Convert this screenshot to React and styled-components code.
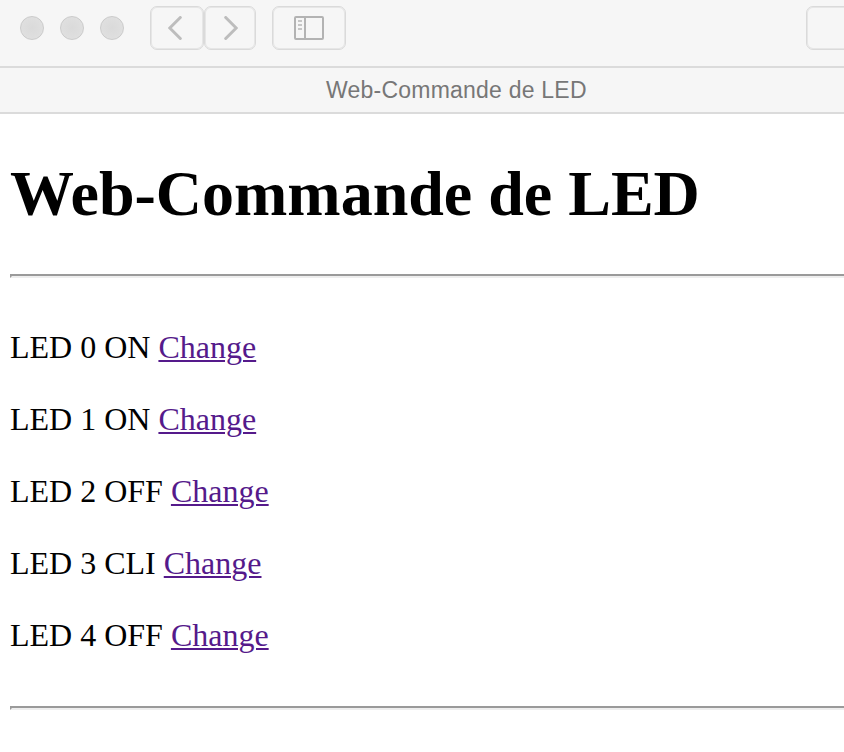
import React from "react";
import styled, { createGlobalStyle } from "styled-components";

const GlobalStyle = createGlobalStyle`
  * { box-sizing: border-box; }
  html, body { margin: 0; padding: 0; background: #fff; overflow: hidden; }
`;

const Window = styled.div`
  width: 844px;
  height: 752px;
  overflow: hidden;
  background: #fff;
`;

const Toolbar = styled.header`
  display: flex;
  align-items: flex-start;
  height: 68px;
  padding: 6px 0 0 20px;
  background: #f6f6f6;
  border-bottom: 2px solid #dbdbdb;
`;

const Lights = styled.div`
  display: flex;
  gap: 16px;
  margin: 10px 26px 0 0;
`;

const Light = styled.span`
  width: 24px;
  height: 24px;
  border-radius: 50%;
  background: radial-gradient(circle, #dadada, #dfdfdf 70%);
  border: 1px solid #cbcbcb;
`;

const ToolButton = styled.button`
  display: flex;
  flex: none;
  align-items: center;
  justify-content: center;
  width: ${(p) => p.$width}px;
  height: 44px;
  margin: 0 ${(p) => p.$gap || 0}px 0 0;
  padding: 0;
  border: 1px solid #dadada;
  border-radius: 7px;
  background: #f6f6f6;
  box-shadow: inset 0 0 0 1px #e6e6e6;
`;

const AddressField = styled.div`
  flex: none;
  width: 60px;
  height: 44px;
  margin-left: 460px;
  border: 1px solid #dadada;
  border-radius: 7px;
  background: #f6f6f6;
  box-shadow: inset 0 0 0 1px #e6e6e6;
`;

const TabBar = styled.div`
  height: 46px;
  padding-left: 326px;
  background: #f6f6f6;
  border-bottom: 2px solid #dbdbdb;
  color: #777;
  font: 23px/44px "Liberation Sans", Arial, sans-serif;
  white-space: nowrap;
`;

const TabTitle = styled.span`
  letter-spacing: 0.22px;
`;

const Page = styled.main`
  padding-left: 10px;
  color: #000;
  font: 32px/36px "Liberation Serif", "Times New Roman", serif;
`;

const Title = styled.h1`
  margin: 0;
  padding-top: 43px;
  height: 160px;
  font-size: 64px;
  line-height: 74px;
  white-space: nowrap;
`;

const Rule = styled.hr`
  height: 4px;
  margin: 0;
  border: 0;
  border-top: 2px solid #9a9a9a;
  border-bottom: 2px solid #eee;
  border-left: 2px solid #9a9a9a;
`;

const LedList = styled.div`
  display: flex;
  flex-direction: column;
  gap: 36px;
  padding: 51px 0 53px;
`;

const LedRow = styled.div`
  height: 36px;
  white-space: nowrap;
`;

const ChangeLink = styled.a`
  color: #551a8b;
  text-decoration: underline;
  text-decoration-thickness: 2px;
  text-underline-offset: 2px;
`;

const leds = ["ON", "ON", "OFF", "CLI", "OFF"];

const Icon = styled.svg`
  flex: none;
  fill: none;
  margin-left: ${(p) => p.$shift || 0}px;
`;

function Chevron({ d, shift }) {
  return (
    <Icon $shift={shift} width="14" height="24" viewBox="0 0 14 24" stroke="#bdbdbd" strokeWidth="3" strokeLinecap="round">
      <path d={d} />
    </Icon>
  );
}

export default function App() {
  return (
    <Window>
      <GlobalStyle />
      <Toolbar>
        <Lights><Light /><Light /><Light /></Lights>
        <ToolButton $width={54} aria-label="Back"><Chevron shift={-4} d="M12.3 1.5 L1.8 12 L12.3 22.5" /></ToolButton>
        <ToolButton $width={52} $gap={16} aria-label="Forward"><Chevron shift={2} d="M1.7 1.5 L12.2 12 L1.7 22.5" /></ToolButton>
        <ToolButton $width={74} aria-label="Sidebar">
          <Icon width="30" height="24" stroke="#b3b3b3" strokeWidth="2">
            <rect x="1" y="1" width="28" height="22" rx="1" />
            <path d="M11 1V23" />
            <path d="M4 5H8 M4 9H8 M4 13H8" stroke="#c6c6c6" />
          </Icon>
        </ToolButton>
        <AddressField />
      </Toolbar>
      <TabBar><TabTitle>Web-Commande de LED</TabTitle></TabBar>
      <Page>
        <Title>Web-Commande de LED</Title>
        <Rule />
        <LedList>
          {leds.map((state, i) => (
            <LedRow key={i}>LED {i} {state} <ChangeLink href="#">Change</ChangeLink></LedRow>
          ))}
        </LedList>
        <Rule />
      </Page>
    </Window>
  );
}
